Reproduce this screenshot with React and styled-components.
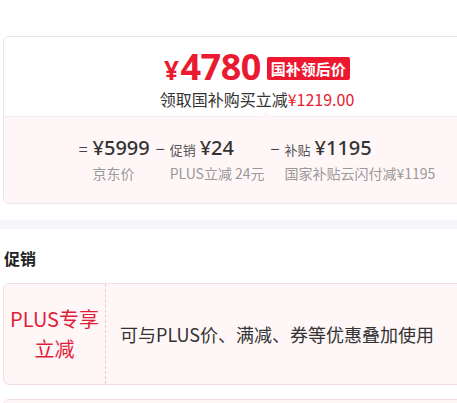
import React from "react";
import styled, { createGlobalStyle } from "styled-components";

const GlobalStyle = createGlobalStyle`
  html, body {
    margin: 0;
    padding: 0;
    background: #fff;
    overflow: hidden;
  }
  body {
    font-family: "Noto Sans CJK SC", "Liberation Sans", sans-serif;
    color: #333;
  }
`;

const Page = styled.div`
  width: 457px;
  height: 403px;
  overflow: hidden;
  padding-top: 36px;
  box-sizing: border-box;
`;

const PriceCard = styled.div`
  width: 506px;
  margin-left: 3px;
  border: 1px solid #ebe6e6;
  border-radius: 6px;
  overflow: hidden;
`;

const Head = styled.div`
  position: relative;
  display: flex;
  flex-direction: column;
  align-items: center;
  height: 79px;
  background: #fff;
  border-bottom: 1px solid #f7eaea;
`;

const Notch = styled.span`
  position: absolute;
  left: 256px;
  bottom: -1px;
  width: 0;
  height: 0;
  border-left: 6px solid transparent;
  border-right: 6px solid transparent;
  border-bottom: 5px solid #fff7f7;
`;

const PriceLine = styled.div`
  display: flex;
  align-items: center;
  gap: 6px;
  margin-top: 13px;
  height: 36px;
`;

const BigPrice = styled.span`
  color: #ea1a30;
  font-family: "Noto Sans", "Liberation Sans", sans-serif;
  font-weight: 700;
  font-size: 36px;
  line-height: 36px;
  letter-spacing: -0.5px;
`;

const Yen = styled.span`
  font-size: 26px;
  margin-right: 2px;
`;

const Badge = styled.span`
  background: #ee1730;
  color: #fff;
  font-weight: 700;
  font-size: 15px;
  line-height: 23px;
  padding: 0 4px;
  border-radius: 2px;
`;

const SubLine = styled.div`
  margin-top: 3px;
  font-size: 16px;
  line-height: 20px;
  color: #333;
`;

const Red = styled.span`
  color: #ea1a30;
`;

const Breakdown = styled.div`
  display: flex;
  justify-content: center;
  gap: 6px;
  height: 86px;
  padding-top: 18px;
  box-sizing: border-box;
  background: #fff7f7;
`;

const Term = styled.div`
  display: flex;
  gap: 5px;
`;

const Op = styled.span`
  font-size: 16px;
  line-height: 26px;
  color: #444;
`;

const TermBody = styled.div`
  display: flex;
  flex-direction: column;
`;

const TermValue = styled.div`
  display: flex;
  align-items: baseline;
  gap: 4px;
  height: 26px;
`;

const TermTag = styled.span`
  font-size: 13px;
  color: #555;
`;

const TermAmount = styled.span`
  font-family: "Noto Sans", "Liberation Sans", sans-serif;
  font-size: 20px;
  line-height: 26px;
  font-weight: 500;
  color: #333;
`;

const TermCaption = styled.div`
  margin-top: 3px;
  font-size: 14px;
  line-height: 18px;
  color: #999;
  white-space: nowrap;
`;

const Band = styled.div`
  height: 9px;
  margin-top: 16px;
  background: #f5f6fa;
`;

const SectionTitle = styled.div`
  margin: 18px 0 0 4px;
  font-size: 16px;
  font-weight: 700;
  line-height: 22px;
  color: #222;
`;

const Promo = styled.div`
  display: flex;
  width: 506px;
  height: 102px;
  margin: ${(p) => p.$top}px 0 0 3px;
  background: #fff6f7;
  border: 1px solid #f3dfe2;
  border-radius: 6px;
  box-sizing: border-box;
`;

const PromoTag = styled.div`
  width: 101px;
  flex: none;
  display: flex;
  align-items: center;
  justify-content: center;
  text-align: center;
  border-right: 1px dashed #edc9ce;
  color: #e21c37;
  font-size: 20px;
  line-height: 30px;
`;

const PromoText = styled.div`
  display: flex;
  align-items: center;
  padding-left: 14px;
  font-size: 18px;
  color: #333;
`;

const terms = [
  { op: "=", amount: "5999", caption: "京东价" },
  { op: "−", tag: "促销", amount: "24", caption: "PLUS立减 24元" },
  { op: "−", tag: "补贴", amount: "1195", caption: "国家补贴云闪付减¥1195" },
];

export default function App() {
  return (
    <Page>
      <GlobalStyle />
      <PriceCard>
        <Head>
          <PriceLine>
            <BigPrice>
              <Yen>¥</Yen>4780
            </BigPrice>
            <Badge>国补领后价</Badge>
          </PriceLine>
          <SubLine>
            领取国补购买立减<Red>¥1219.00</Red>
          </SubLine>
          <Notch />
        </Head>
        <Breakdown>
          {terms.map((t) => (
            <Term key={t.caption}>
              <Op>{t.op}</Op>
              <TermBody>
                <TermValue>
                  {t.tag && <TermTag>{t.tag}</TermTag>}
                  <TermAmount>¥{t.amount}</TermAmount>
                </TermValue>
                <TermCaption>{t.caption}</TermCaption>
              </TermBody>
            </Term>
          ))}
        </Breakdown>
      </PriceCard>
      <Band />
      <SectionTitle>促销</SectionTitle>
      <Promo $top={14}>
        <PromoTag>
          PLUS专享
          <br />
          立减
        </PromoTag>
        <PromoText>可与PLUS价、满减、券等优惠叠加使用</PromoText>
      </Promo>
      <Promo $top={14} />
    </Page>
  );
}
